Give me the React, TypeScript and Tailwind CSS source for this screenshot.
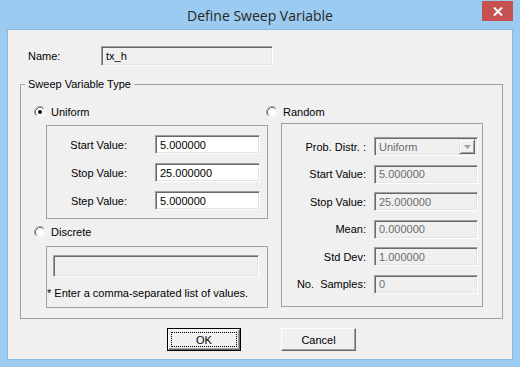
import clsx from 'clsx';

const sunken =
  'border border-t-[#a0a0a0] border-l-[#a0a0a0] border-b-white border-r-white shadow-[inset_1px_1px_0_#696969,inset_-1px_-1px_0_#e3e3e3]';

const Radio = ({ checked }: { checked?: boolean }) => (
  <svg width="12" height="12" viewBox="0 0 12 12" className="shrink-0">
    <circle cx="6" cy="6" r="5" fill="#fff" />
    <path d="M2.11 9.89A5.5 5.5 0 0 1 9.89 2.11" fill="none" stroke="#a0a0a0" />
    <path d="M9.89 2.11A5.5 5.5 0 0 1 2.11 9.89" fill="none" stroke="#fff" />
    <path d="M2.82 9.18A4.5 4.5 0 0 1 9.18 2.82" fill="none" stroke="#696969" />
    <path d="M9.18 2.82A4.5 4.5 0 0 1 2.82 9.18" fill="none" stroke="#e3e3e3" />
    {checked && <circle cx="6" cy="6" r="2" fill="#000" />}
  </svg>
);

const Field = ({ value, disabled, className }: { value: string; disabled?: boolean; className?: string }) => (
  <div
    className={clsx(
      'flex items-center pl-[4px]',
      sunken,
      disabled ? 'bg-[#f0f0f0] text-[#6d6d6d]' : 'bg-white text-black',
      className,
    )}
  >
    {value}
  </div>
);

const RadioRow = ({ label, checked, className }: { label: string; checked?: boolean; className?: string }) => (
  <div className={clsx('flex items-center gap-[5px] h-[14px]', className)}>
    <Radio checked={checked} />
    <span>{label}</span>
  </div>
);

const uniformRows = [
  ['Start Value:', '5.000000'],
  ['Stop Value:', '25.000000'],
  ['Step Value:', '5.000000'],
];

const randomRows = [
  ['Start Value:', '5.000000'],
  ['Stop Value:', '25.000000'],
  ['Mean:', '0.000000'],
  ['Std Dev:', '1.000000'],
  ['No.  Samples:', '0'],
];

export default function App() {
  return (
    <div className="w-[520px] h-[367px] bg-[#9bcbf1] flex flex-col font-['Liberation_Sans',Arial,sans-serif] text-[11px] leading-[14px] text-black">
      {/* Title bar */}
      <div className="h-[29px] grid grid-cols-[1fr_auto_1fr]">
        <div />
        <div className="self-center font-['Open_Sans',sans-serif] text-[14px] leading-[18px] text-[#262626] pt-[2px]">
          Define Sweep Variable
        </div>
        <div className="flex justify-end items-start">
          <div className="mt-[1px] mr-[7px] w-[31px] h-[20px] bg-[#c75050] flex items-center justify-center">
            <svg width="10" height="9" viewBox="0 0 10 9">
              <path d="M1 0.5L9 8.5M9 0.5L1 8.5" stroke="#fff" strokeWidth="2" />
            </svg>
          </div>
        </div>
      </div>

      {/* Client area */}
      <div className="ml-[7px] w-[506px] h-[331px] border border-[#8bb9e0] bg-[#f0f0f0] flex flex-col">
        <div className="flex items-center mt-[16px] pl-[20px]">
          <span className="w-[73px]">Name:</span>
          <Field value="tx_h" disabled className="w-[172px] h-[20px] !text-black" />
        </div>

        <fieldset className="ml-[12px] mt-[11px] w-[483px] h-[242px] border border-[#a0a0a0] pl-[4px]">
          <legend className="px-[3px] leading-[14px]">Sweep Variable Type</legend>
          <div className="flex">
            {/* Left column */}
            <div className="w-[243px] flex flex-col">
              <RadioRow label="Uniform" checked className="mt-[14px] ml-[9px]" />
              <div className="mt-[6px] ml-[21px] w-[222px] h-[94px] border border-[#a0a0a0] pt-[9px] flex flex-col gap-[9px]">
                {uniformRows.map(([label, value]) => (
                  <div key={label} className="flex items-center">
                    <span className="w-[80px] text-right">{label}</span>
                    <Field value={value} className="ml-[28px] w-[105px] h-[19px]" />
                  </div>
                ))}
              </div>
              <RadioRow label="Discrete" className="mt-[6px] ml-[9px]" />
              <div className="mt-[7px] ml-[21px] w-[222px] h-[62px] border border-[#a0a0a0] flex flex-col">
                <div className={clsx('mt-[8px] ml-[6px] w-[206px] h-[22px] bg-[#f0f0f0]', sunken)} />
                <div className="mt-[9px] whitespace-nowrap">* Enter a comma-separated list of values.</div>
              </div>
            </div>

            {/* Right column */}
            <div className="flex flex-col">
              <RadioRow label="Random" className="mt-[14px] -ml-[2px]" />
              <div className="mt-[4px] ml-[13px] w-[202px] h-[184px] border border-[#a0a0a0] pt-[13px] flex flex-col gap-[8.6px]">
                <div className="flex items-center">
                  <span className="w-[84px] text-right">Prob. Distr. :</span>
                  <div
                    className={clsx(
                      'ml-[8px] w-[104px] h-[19px] flex items-center pl-[4px] pr-[2px] bg-[#f0f0f0] text-[#6d6d6d]',
                      sunken,
                    )}
                  >
                    <span className="flex-1">Uniform</span>
                    <div className="w-[16px] h-[15px] border border-t-[#e3e3e3] border-l-[#e3e3e3] border-r-[#696969] border-b-[#696969] shadow-[inset_1px_1px_0_#fff,inset_-1px_-1px_0_#a0a0a0] flex items-center justify-center">
                      <svg width="7" height="4" viewBox="0 0 7 4">
                        <path d="M0 0H7L3.5 4Z" fill="#a0a0a0" />
                      </svg>
                    </div>
                  </div>
                </div>
                {randomRows.map(([label, value]) => (
                  <div key={label} className="flex items-center">
                    <span className="w-[84px] text-right whitespace-pre">{label}</span>
                    <Field value={value} disabled className="ml-[8px] w-[104px] h-[19px]" />
                  </div>
                ))}
              </div>
            </div>
          </div>
        </fieldset>

        {/* Buttons */}
        <div className="mt-[9px] pl-[3px] flex justify-center gap-[40px]">
          <button className="w-[74px] h-[23px] border border-black bg-[#f0f0f0] p-0">
            <div className="h-full border border-t-white border-l-white border-r-[#696969] border-b-[#696969] shadow-[inset_-1px_-1px_0_#a0a0a0] p-[2px]">
              <div className="h-full border border-dotted border-black flex items-center justify-center">OK</div>
            </div>
          </button>
          <button className="w-[75px] h-[23px] bg-[#f0f0f0] border border-t-white border-l-white border-r-[#696969] border-b-[#696969] shadow-[inset_-1px_-1px_0_#a0a0a0] flex items-center justify-center">
            Cancel
          </button>
        </div>
      </div>
    </div>
  );
}
